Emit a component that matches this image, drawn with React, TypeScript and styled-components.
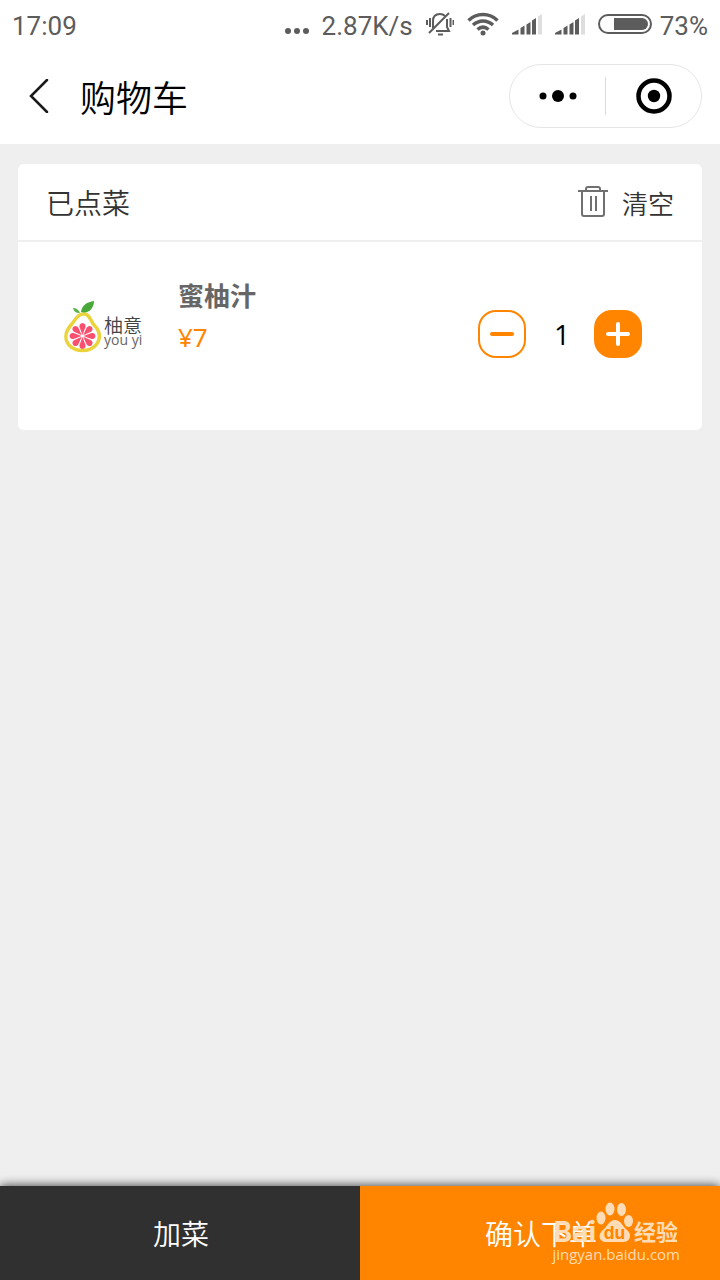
import React, { useState } from "react";
import styled, { createGlobalStyle } from "styled-components";

const orange = "#ff8500";
const statusGrey = "#5c5c5c";

const GlobalStyle = createGlobalStyle`
  *, *::before, *::after { box-sizing: border-box; }
  body {
    margin: 0;
    background: #efefef;
    font-family: "Noto Sans CJK SC", sans-serif;
    font-weight: 350;
  }
  button { margin: 0; padding: 0; border: 0; background: none; font: inherit; color: inherit; cursor: pointer; }
  svg { display: block; flex: none; }
`;

const Page = styled.div`
  display: flex;
  flex-direction: column;
  min-height: 100vh;
`;

const StatusBar = styled.div`
  display: flex;
  align-items: center;
  height: 48px;
  padding: 0 12px;
  background: #fff;
  color: ${statusGrey};
  font: 400 26px/48px Roboto, sans-serif;
`;

const StatusText = styled.span`
  padding-top: 4px;
  line-height: 44px;
  white-space: nowrap;
`;

const StatusIcons = styled.div`
  display: flex;
  align-items: center;
  gap: 13px;
  margin-left: auto;
`;

const BatteryLevel = styled.div`
  display: flex;
  align-items: center;
  gap: 8px;
`;

const NavBar = styled.header`
  display: flex;
  align-items: center;
  height: 96px;
  padding: 0 18px 0 20px;
  background: #fff;
`;

const BackButton = styled.button`
  display: grid;
  place-items: center;
  width: 38px;
  height: 48px;
`;

const Title = styled.h1`
  margin: 0 auto 0 22px;
  color: #000;
  font-size: 36px;
  font-weight: 350;
  line-height: 48px;
`;

const Capsule = styled.div`
  display: flex;
  align-items: center;
  width: 193px;
  height: 64px;
  border: 1px solid #e6e6e6;
  border-radius: 32px;
`;

const CapsuleButton = styled.button`
  display: grid;
  flex: 1;
  place-items: center;
  height: 38px;

  & + & {
    border-left: 1px solid #dcdcdc;
  }
`;

const Content = styled.main`
  flex: 1;
  padding: 20px 18px;
`;

const Card = styled.section`
  background: #fff;
  border-radius: 6px;
`;

const CardHeader = styled.div`
  display: flex;
  align-items: center;
  justify-content: space-between;
  height: 78px;
  padding: 0 28px;
  border-bottom: 2px solid #efefef;
  color: #333;
`;

const CardTitle = styled.h2`
  margin: 0;
  font-size: 28px;
  font-weight: 350;
`;

const ClearButton = styled.button`
  display: flex;
  align-items: center;
  gap: 14px;
  font-size: 26px;
`;

const ItemRow = styled.article`
  display: flex;
  align-items: flex-start;
  height: 188px;
  padding: 32px 60px 0 46px;
`;

const Brand = styled.div`
  display: flex;
  align-items: center;
  width: 114px;
  height: 106px;
`;

const BrandName = styled.div`
  display: flex;
  flex-direction: column;
  margin-top: 8px;
  margin-left: 2px;
  color: #444;
  white-space: nowrap;
`;

const BrandChinese = styled.span`
  font-size: 19px;
  line-height: 18px;
`;

const BrandLatin = styled.span`
  color: #666;
  font: 400 14px/12px "Open Sans", sans-serif;
`;

const ItemInfo = styled.div`
  flex: 1;
`;

const ItemName = styled.h3`
  margin: 0;
  color: #666;
  font-size: 26px;
  font-weight: 700;
  line-height: 42px;
`;

const Price = styled.p`
  margin: 0;
  color: ${orange};
  font: 400 26px/42px "Noto Sans", sans-serif;
`;

const Stepper = styled.div`
  display: flex;
  align-items: center;
  margin-top: 36px;
`;

const StepButton = styled.button<{ $filled?: boolean }>`
  display: grid;
  place-items: center;
  width: 48px;
  height: 48px;
  border: 2px solid ${orange};
  border-radius: 18px;
  background: ${(p) => (p.$filled ? orange : "#fff")};
  color: ${(p) => (p.$filled ? "#fff" : orange)};
`;

const Quantity = styled.output`
  width: 68px;
  padding-left: 4px;
  color: #000;
  font: 400 28px/48px "Open Sans", sans-serif;
  text-align: center;
`;

const Footer = styled.footer`
  position: relative;
  display: flex;
  height: 94px;
  box-shadow: 0 0 10px rgba(0, 0, 0, 0.8);
`;

const FooterButton = styled.button<{ $primary?: boolean }>`
  flex: 1;
  padding-left: 2px;
  background: ${(p) => (p.$primary ? orange : "#303030")};
  color: #fff;
  font-size: 28px;
  line-height: 94px;
`;

const Watermark = styled.div`
  position: absolute;
  right: 40px;
  bottom: 16px;
  display: flex;
  flex-direction: column;
  align-items: flex-end;
  color: #ffdcb5;
  pointer-events: none;
`;

const WatermarkLogo = styled.div`
  display: flex;
  align-items: flex-end;
  height: 44px;
  margin-right: 2px;
`;

const WatermarkWord = styled.span<{ $cjk?: boolean }>`
  font-family: ${(p) => (p.$cjk ? '"Noto Sans CJK SC"' : "Inter")}, sans-serif;
  font-size: ${(p) => (p.$cjk ? 22 : 28)}px;
  font-weight: 700;
  line-height: ${(p) => (p.$cjk ? 28 : 24)}px;
`;

const WatermarkUrl = styled.span`
  font: 400 15px/20px "Open Sans", sans-serif;
`;

const Bell = () => (
  <svg width="28" height="26" viewBox="0 0 28 26" fill="none" stroke={statusGrey} strokeWidth="2">
    <path d="M7 17V10c0-5 3-7 7-7 2 0 4 1 5 2M21 8v8l2 4H10M12 23.500h5" />
    <path d="M3 22 23 2" />
    <path d="M1 9v5M4 7v9M24.500 7v9M27.500 9v5" />
  </svg>
);

const Wifi = () => (
  <svg width="32" height="24" viewBox="0 0 32 24" fill="none" stroke={statusGrey} strokeWidth="3.500">
    <path d="M1.500 8.500C9.500.5 22.500.5 30.500 8.500M6 13c6-5.500 14-5.500 20 0M10.500 17.500c3.500-3 7.500-3 11 0" />
    <circle cx="16" cy="21" r="2.500" fill={statusGrey} stroke="none" />
  </svg>
);

const Signal = () => (
  <svg width="30" height="21" viewBox="0 0 30 21" fill={statusGrey}>
    <path d="M0 20.500V19L6.500 15.500v5zM8.500 14l4-2.500v9h-4zM14.500 10.500l4-2.500v12.500h-4zM20 6.500 24 4v16.500h-4z" />
    <path d="M26 2.500 30 0v20.500h-4z" fill="#dedede" />
  </svg>
);

const Battery = () => (
  <svg width="54" height="20" viewBox="0 0 54 20">
    <rect x="1" y="1" width="52" height="18" rx="9" fill="none" stroke={statusGrey} strokeWidth="2" />
    <path d="M16 4h28a6 6 0 0 1 0 12H16z" fill={statusGrey} />
  </svg>
);

const Ellipsis = () => (
  <svg width="24" height="20" viewBox="0 0 24 20" fill={statusGrey}>
    <circle cx="3" cy="17" r="3" />
    <circle cx="12" cy="17" r="3" />
    <circle cx="21" cy="17" r="3" />
  </svg>
);

const Trash = () => (
  <svg width="30" height="32" viewBox="0 0 30 32" fill="none" stroke="#707070" strokeWidth="2">
    <path d="M0 5h30M4 5v23q0 2 2 2h18q2 0 2-2V5M8 4V3q0-2 2-2h10q2 0 2 2v1" />
    <path d="M13 10v15M18 10v15" />
  </svg>
);

const Pomelo = () => (
  <svg width="38" height="54" viewBox="0 0 38 54">
    <path
      d="M21 14C26 15 26 20 30 25C37 32 37 40 31 46C25 52 12 52 6 46C0 40 1 32 7 25C12 19 14 13 21 14Z"
      fill="#fff"
      stroke="#ead33b"
      strokeWidth="3.500"
    />
    <path d="M17 12C18 5 23 2 30 1C30 8 25 14 17 12Z" fill="#48a83a" />
    <path d="M16 13C14 9 12 8 9 8C10 12 12 13 16 13Z" fill="#5cb549" />
    <g fill="#f9506f">
      {[0, 45, 90, 135, 180, 225, 270, 315].map((angle) => (
        <path key={angle} d="M18.500 35 15.500 27Q15 23.500 18.500 23Q22 23.500 21.500 27Z" transform={`rotate(${angle} 18.500 36)`} />
      ))}
    </g>
  </svg>
);

const Paw = () => (
  <svg width="38" height="42" viewBox="0 0 38 42" fill="#ffdcb5">
    <ellipse cx="14" cy="7" rx="4.500" ry="6.500" />
    <ellipse cx="25.500" cy="7.500" rx="4.500" ry="6.500" />
    <ellipse cx="5" cy="16" rx="4.500" ry="6.500" />
    <ellipse cx="32.500" cy="19" rx="4.500" ry="6" />
    <path d="M19 18c6 0 8 7 12 10 5 4 4 12-4 12-4 0-5 0-8 0s-5 0-8 0c-9 0-9-8-4-12 4-3 6-10 12-10z" />
    <text x="18.500" y="37" textAnchor="middle" fontFamily="Inter, sans-serif" fontSize="17" fontWeight="700" fill={orange}>
      du
    </text>
  </svg>
);

export default function App() {
  const [count, setCount] = useState(1);

  return (
    <Page>
      <GlobalStyle />
      <StatusBar>
        <StatusText>17:09</StatusText>
        <StatusIcons>
          <Ellipsis />
          <StatusText>2.87K/s</StatusText>
          <Bell />
          <Wifi />
          <Signal />
          <Signal />
          <BatteryLevel>
            <Battery />
            <StatusText>73%</StatusText>
          </BatteryLevel>
        </StatusIcons>
      </StatusBar>

      <NavBar>
        <BackButton aria-label="返回">
          <svg width="20" height="34" viewBox="0 0 20 34" fill="none" stroke="#1a1a1a" strokeWidth="2.500">
            <path d="M18 1 2 17l16 16" strokeLinecap="round" />
          </svg>
        </BackButton>
        <Title>购物车</Title>
        <Capsule>
          <CapsuleButton aria-label="更多">
            <svg width="38" height="12" viewBox="0 0 38 12">
              <circle cx="4" cy="6" r="3.500" />
              <circle cx="19" cy="6" r="6" />
              <circle cx="34" cy="6" r="3.500" />
            </svg>
          </CapsuleButton>
          <CapsuleButton aria-label="关闭">
            <svg width="36" height="36" viewBox="0 0 36 36">
              <circle cx="18" cy="18" r="15.500" fill="none" stroke="#000" strokeWidth="4.500" />
              <circle cx="18" cy="18" r="6.200" />
            </svg>
          </CapsuleButton>
        </Capsule>
      </NavBar>

      <Content>
        <Card>
          <CardHeader>
            <CardTitle>已点菜</CardTitle>
            <ClearButton>
              <Trash />
              清空
            </ClearButton>
          </CardHeader>
          <ItemRow>
            <Brand>
              <Pomelo />
              <BrandName>
                <BrandChinese>柚意</BrandChinese>
                <BrandLatin>you yi</BrandLatin>
              </BrandName>
            </Brand>
            <ItemInfo>
              <ItemName>蜜柚汁</ItemName>
              <Price>¥7</Price>
            </ItemInfo>
            <Stepper>
              <StepButton aria-label="减少" onClick={() => setCount(Math.max(0, count - 1))}>
                <svg width="26" height="26" viewBox="0 0 26 26" stroke="currentColor" strokeWidth="4" strokeLinecap="round">
                  <path d="M3 13h20" />
                </svg>
              </StepButton>
              <Quantity>{count}</Quantity>
              <StepButton $filled aria-label="增加" onClick={() => setCount(count + 1)}>
                <svg width="26" height="26" viewBox="0 0 26 26" stroke="currentColor" strokeWidth="4" strokeLinecap="round">
                  <path d="M3 13h20M13 3v20" />
                </svg>
              </StepButton>
            </Stepper>
          </ItemRow>
        </Card>
      </Content>

      <Footer>
        <FooterButton>加菜</FooterButton>
        <FooterButton $primary>确认下单</FooterButton>
        <Watermark>
          <WatermarkLogo>
            <WatermarkWord>Bai</WatermarkWord>
            <Paw />
            <WatermarkWord $cjk>经验</WatermarkWord>
          </WatermarkLogo>
          <WatermarkUrl>jingyan.baidu.com</WatermarkUrl>
        </Watermark>
      </Footer>
    </Page>
  );
}
